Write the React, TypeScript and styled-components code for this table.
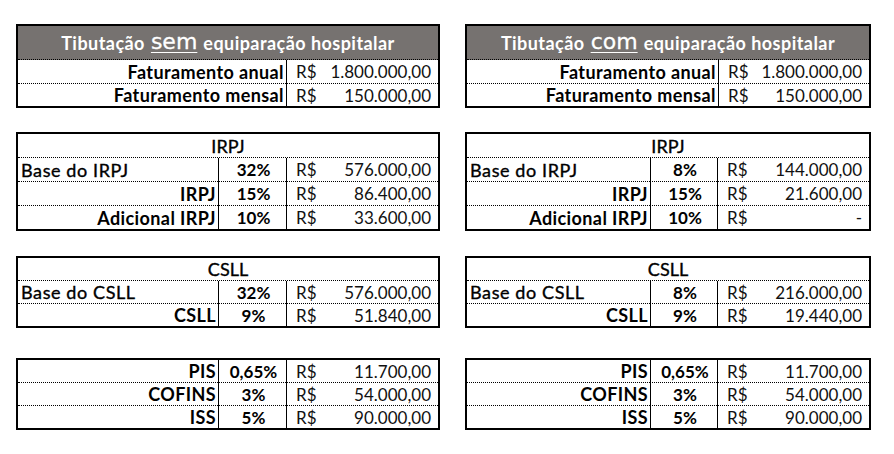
import React from "react";
import styled, { createGlobalStyle } from "styled-components";

const GlobalStyle = createGlobalStyle`
  html, body {
    margin: 0;
    padding: 0;
    background: #fff;
  }
  body {
    font-family: Lato, "Open Sans", sans-serif;
    color: #000;
  }
`;

const Page = styled.div`
  display: flex;
  align-items: flex-start;
  gap: 25px;
  padding: 24px 0 0 16px;
  width: 894px;
  height: 454px;
  box-sizing: border-box;
`;

const Column = styled.div<{ $width: number }>`
  display: flex;
  flex-direction: column;
  width: ${(p) => p.$width}px;
`;

const Sheet = styled.div<{ $cols: string; $top: number }>`
  display: grid;
  grid-template-columns: ${(p) => p.$cols};
  margin-top: ${(p) => p.$top}px;
  border: 2px solid #000;
  box-sizing: border-box;
`;

const Cell = styled.div<{ $h: number; $last?: boolean; $divider?: boolean }>`
  height: ${(p) => p.$h}px;
  display: flex;
  align-items: center;
  box-sizing: border-box;
  border-bottom: ${(p) => (p.$last ? "none" : "1px dotted #000")};
  border-left: ${(p) => (p.$divider ? "1px solid #000" : "none")};
  font-size: 17px;
  white-space: nowrap;
  overflow: hidden;
`;

const Header = styled(Cell)`
  grid-column: 1 / -1;
  justify-content: center;
  background: #767270;
  color: #fff;
  font-weight: 700;
  font-size: 18px;
  letter-spacing: 0.45px;
`;

const Emph = styled.span`
  font-family: "DejaVu Sans", sans-serif;
  font-weight: 400;
  font-size: 22px;
  letter-spacing: 0;
  -webkit-text-stroke: 0.3px #fff;
  text-decoration: underline;
  text-decoration-thickness: 1px;
  text-underline-offset: 3px;
  margin: 0 6px;
  position: relative;
  top: -1px;
`;

const Title = styled(Cell)`
  grid-column: 1 / -1;
  justify-content: center;
  font-size: 18px;
  font-weight: 400;
  -webkit-text-stroke: 0.35px #000;
`;

const Label = styled(Cell)<{ $bold?: boolean; $left?: boolean }>`
  justify-content: ${(p) => (p.$left ? "flex-start" : "flex-end")};
  font-size: 18px;
  font-weight: ${(p) => (p.$bold ? 700 : 400)};
  letter-spacing: ${(p) => (p.$bold ? "0.4px" : "0.6px")};
  -webkit-text-stroke: ${(p) => (p.$bold ? "0" : "0.35px #000")};
  padding: ${(p) => (p.$left ? "0 0 0 3px" : "0 2px 0 0")};
`;

const Pct = styled(Cell)`
  justify-content: center;
  font-weight: 700;
  padding-left: 2px;
`;

const Money = styled(Cell)`
  justify-content: space-between;
  padding: 0 7px 0 9px;
  color: #111;
`;

type Row = { label: string; bold?: boolean; left?: boolean; pct?: string; value: string };

const Value: React.FC<{ h: number; last?: boolean; value: string }> = ({ h, last, value }) => (
  <Money $h={h} $last={last} $divider>
    <span>R$</span>
    <span>{value}</span>
  </Money>
);

const Summary: React.FC<{ word: string; cols: string; annual: string; monthly: string }> = ({
  word,
  cols,
  annual,
  monthly,
}) => (
  <Sheet $cols={cols} $top={0}>
    <Header $h={34}>
      Tibutação<Emph>{word}</Emph>equiparação hospitalar
    </Header>
    <Label $h={24} $bold>Faturamento anual</Label>
    <Value h={24} value={annual} />
    <Label $h={22} $bold $last>Faturamento mensal</Label>
    <Value h={22} last value={monthly} />
  </Sheet>
);

const TaxTable: React.FC<{ title?: string; cols: string; top: number; h: number; rows: Row[] }> = ({
  title,
  cols,
  top,
  h,
  rows,
}) => (
  <Sheet $cols={cols} $top={top}>
    {title && <Title $h={h}>{title}</Title>}
    {rows.map((r, i) => {
      const last = i === rows.length - 1;
      const rh = last ? h - 1 : h;
      return (
        <React.Fragment key={r.label}>
          <Label $h={rh} $last={last} $bold={r.bold} $left={r.left}>
            {r.label}
          </Label>
          <Pct $h={rh} $last={last} $divider>
            {r.pct}
          </Pct>
          <Value h={rh} last={last} value={r.value} />
        </React.Fragment>
      );
    })}
  </Sheet>
);

const others = (pis: string, cofins: string, iss: string): Row[] => [
  { label: "PIS", bold: true, pct: "0,65%", value: pis },
  { label: "COFINS", bold: true, pct: "3%", value: cofins },
  { label: "ISS", bold: true, pct: "5%", value: iss },
];

const App: React.FC = () => {
  const leftCols = "200px 68px 1fr";
  const rightCols = "183px 67px 1fr";
  return (
    <>
      <GlobalStyle />
      <Page>
        <Column $width={424}>
          <Summary word="sem" cols="268px 1fr" annual="1.800.000,00" monthly="150.000,00" />
          <TaxTable
            title="IRPJ"
            cols={leftCols}
            top={24}
            h={24}
            rows={[
              { label: "Base do IRPJ", left: true, pct: "32%", value: "576.000,00" },
              { label: "IRPJ", bold: true, pct: "15%", value: "86.400,00" },
              { label: "Adicional IRPJ", bold: true, pct: "10%", value: "33.600,00" },
            ]}
          />
          <TaxTable
            title="CSLL"
            cols={leftCols}
            top={25}
            h={23}
            rows={[
              { label: "Base do CSLL", left: true, pct: "32%", value: "576.000,00" },
              { label: "CSLL", bold: true, pct: "9%", value: "51.840,00" },
            ]}
          />
          <TaxTable cols={leftCols} top={30} h={23} rows={others("11.700,00", "54.000,00", "90.000,00")} />
        </Column>
        <Column $width={406}>
          <Summary word="com" cols="251px 1fr" annual="1.800.000,00" monthly="150.000,00" />
          <TaxTable
            title="IRPJ"
            cols={rightCols}
            top={24}
            h={24}
            rows={[
              { label: "Base do IRPJ", left: true, pct: "8%", value: "144.000,00" },
              { label: "IRPJ", bold: true, pct: "15%", value: "21.600,00" },
              { label: "Adicional IRPJ", bold: true, pct: "10%", value: "-" },
            ]}
          />
          <TaxTable
            title="CSLL"
            cols={rightCols}
            top={25}
            h={23}
            rows={[
              { label: "Base do CSLL", left: true, pct: "8%", value: "216.000,00" },
              { label: "CSLL", bold: true, pct: "9%", value: "19.440,00" },
            ]}
          />
          <TaxTable cols={rightCols} top={30} h={23} rows={others("11.700,00", "54.000,00", "90.000,00")} />
        </Column>
      </Page>
    </>
  );
};

export default App;
